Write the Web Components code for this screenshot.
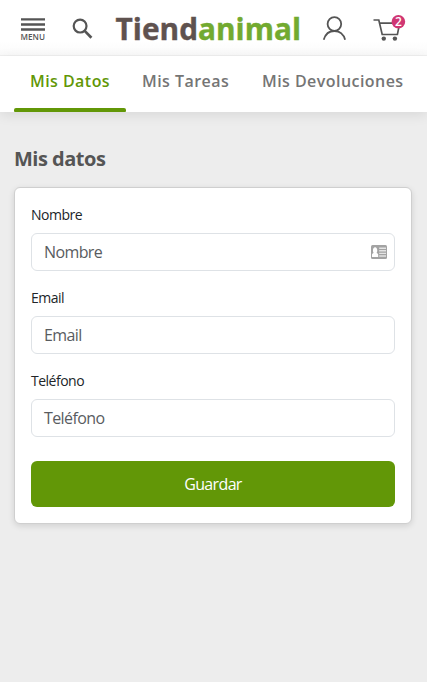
<!DOCTYPE html>
<html lang="es">
<head>
<meta charset="utf-8">
<title>Tiendanimal - Mis datos</title>
<style>
html,body{margin:0;height:100%;overflow:hidden}
body{background:#ededed;font-family:"Open Sans","Noto Sans",sans-serif;color:#212529}
</style>
</head>
<body>
<ta-account></ta-account>
<script>
const define = (name, html) => {
  const t = document.createElement('template');
  t.innerHTML = html;
  customElements.define(name, class extends HTMLElement {
    constructor(){
      super();
      this.attachShadow({mode:'open'}).append(t.content.cloneNode(true));
    }
  });
};

define('ta-header', `
<style>
:host{display:flex;box-sizing:border-box;background:linear-gradient(#fff 75%,#fafafa);border-bottom:1px solid #f0f0f0;height:56px}
svg{display:block;flex:none}
text{font-family:"Open Sans","Noto Sans",sans-serif}
</style>
<svg width="60" height="55" viewBox="0 0 60 55"><path d="M21 19.4h24M21 24.5h24M21 29.500h24" stroke="#555" stroke-width="2.4"/><text x="20.6" y="39.600" font-size="9" font-weight="600" fill="#555" textLength="24.4" lengthAdjust="spacingAndGlyphs">MENU</text></svg>
<svg width="50" height="55" viewBox="60 0 50 55" fill="none" stroke="#555"><circle cx="80.1" cy="26.1" r="6.4" stroke-width="2.2"/><path d="M84.700 30.900l6.700 6.800" stroke-width="2.7"/></svg>
<svg width="200" height="55" viewBox="110 0 200 55"><text x="115.600" y="39.500" font-size="31" font-weight="700" fill="#5f524f" stroke="#5f524f" stroke-width=".4" textLength="82.500" lengthAdjust="spacingAndGlyphs">Tiend</text><text x="198" y="39.500" font-size="31" font-weight="700" fill="#72aa30" stroke="#72aa30" stroke-width=".4" textLength="103" lengthAdjust="spacingAndGlyphs">animal</text></svg>
<svg width="50" height="55" viewBox="310 0 50 55" fill="none" stroke="#555" stroke-width="1.8"><circle cx="334.4" cy="24" r="6.8"/><path d="M323.7 39.8c1.6-5.6 5.8-8.8 10.7-8.8s9.3 3.2 10.7 8.8"/></svg>
<svg width="67" height="55" viewBox="360 0 67 55"><path d="M373.5 20h5.3l3.4 14.5h15.2l2.3-11.4h-20" fill="none" stroke="#555" stroke-width="1.7"/><circle cx="383.8" cy="38.6" r="2.2" fill="#555"/><circle cx="394.9" cy="38.6" r="2.2" fill="#555"/><circle cx="398.4" cy="21.7" r="6.8" fill="#d03673"/><text x="398.4" y="26" font-size="12" font-weight="600" fill="#fff" text-anchor="middle">2</text></svg>`);

define('ta-tab', `
<style>
:host{display:block;box-sizing:border-box;height:56px;padding:14px 16px 0;font:600 16px/22px "Open Sans","Noto Sans",sans-serif;letter-spacing:.45px;color:#757575;white-space:nowrap;width:var(--w)}
:host([active]){color:#629707}
i{display:none;height:4px;border-radius:2px 2px 1px 1px;background:#629707;margin:16px -16px 0}
:host([active]) i{display:block}
</style><slot></slot><i></i>`);

define('ta-tabs', `
<style>:host{display:flex;height:56px;padding-left:14px;background:#fff;box-shadow:0 3px 12px rgba(0,0,0,.09)}</style>
<slot></slot>`);

define('ta-field', `
<style>
:host{display:block;margin-bottom:16px}
.label{font-size:14px;line-height:21px;margin-bottom:8px;letter-spacing:-.5px}
.box{box-sizing:border-box;height:38px;border:1px solid #dee2e6;border-radius:6px;padding:0 7px 0 12px;display:flex;align-items:center;justify-content:space-between;font-size:16px;line-height:24px;color:#595c5f;letter-spacing:-.6px}
::slotted(svg){display:block}
</style>
<div class="label"><slot name="label"></slot></div>
<div class="box"><slot name="hint"></slot><slot name="icon"></slot></div>`);

define('ta-button', `
<style>:host{display:flex;align-items:center;justify-content:center;height:46px;margin-top:24px;border-radius:6px;background:#629707;color:#fff;font-size:16px;letter-spacing:-.65px}</style>
<span><slot></slot></span>`);

define('ta-card', `
<style>:host{display:block;box-sizing:border-box;height:337px;padding:16px;border:1px solid #cfcfcf;border-radius:6px;background:#fff;box-shadow:0 2px 6px rgba(0,0,0,.12)}</style>
<slot></slot>`);

define('ta-account', `
<style>
:host{display:block}
main{padding:35px 15px 0 14px}
h1{margin:0 0 16px;font-size:20px;line-height:24px;font-weight:700;color:#555;letter-spacing:-.5px}
ta-field{color:#212529}
</style>
<ta-header></ta-header>
<ta-tabs><ta-tab active style="--w:112px">Mis Datos</ta-tab><ta-tab style="--w:120px">Mis Tareas</ta-tab><ta-tab>Mis Devoluciones</ta-tab></ta-tabs>
<main><h1>Mis datos</h1>
<ta-card>
<ta-field><span slot="label">Nombre</span><span slot="hint">Nombre</span>
<svg slot="icon" width="16" height="14" viewBox="0 0 16 14"><rect width="16" height="14" rx="1.5" fill="#a3a3a3"/><path d="M1 12V9.800c0-.8.6-1.300 1.700-1.700C1.300 6 1.900 2.200 4.100 2.200S6.900 6 5.500 8.100c1.100.4 1.700.9 1.700 1.700V12z" fill="#fff"/><path d="M8.200 3.200h6.800M8.200 5.800h6.800M8.200 8.400h6.800M8.200 11h6.800" stroke="#e4e4e4" stroke-width="1.400"/></svg></ta-field>
<ta-field><span slot="label">Email</span><span slot="hint">Email</span></ta-field>
<ta-field><span slot="label">Teléfono</span><span slot="hint">Teléfono</span></ta-field>
<ta-button>Guardar</ta-button>
</ta-card></main>`);
</script>
</body>
</html>
